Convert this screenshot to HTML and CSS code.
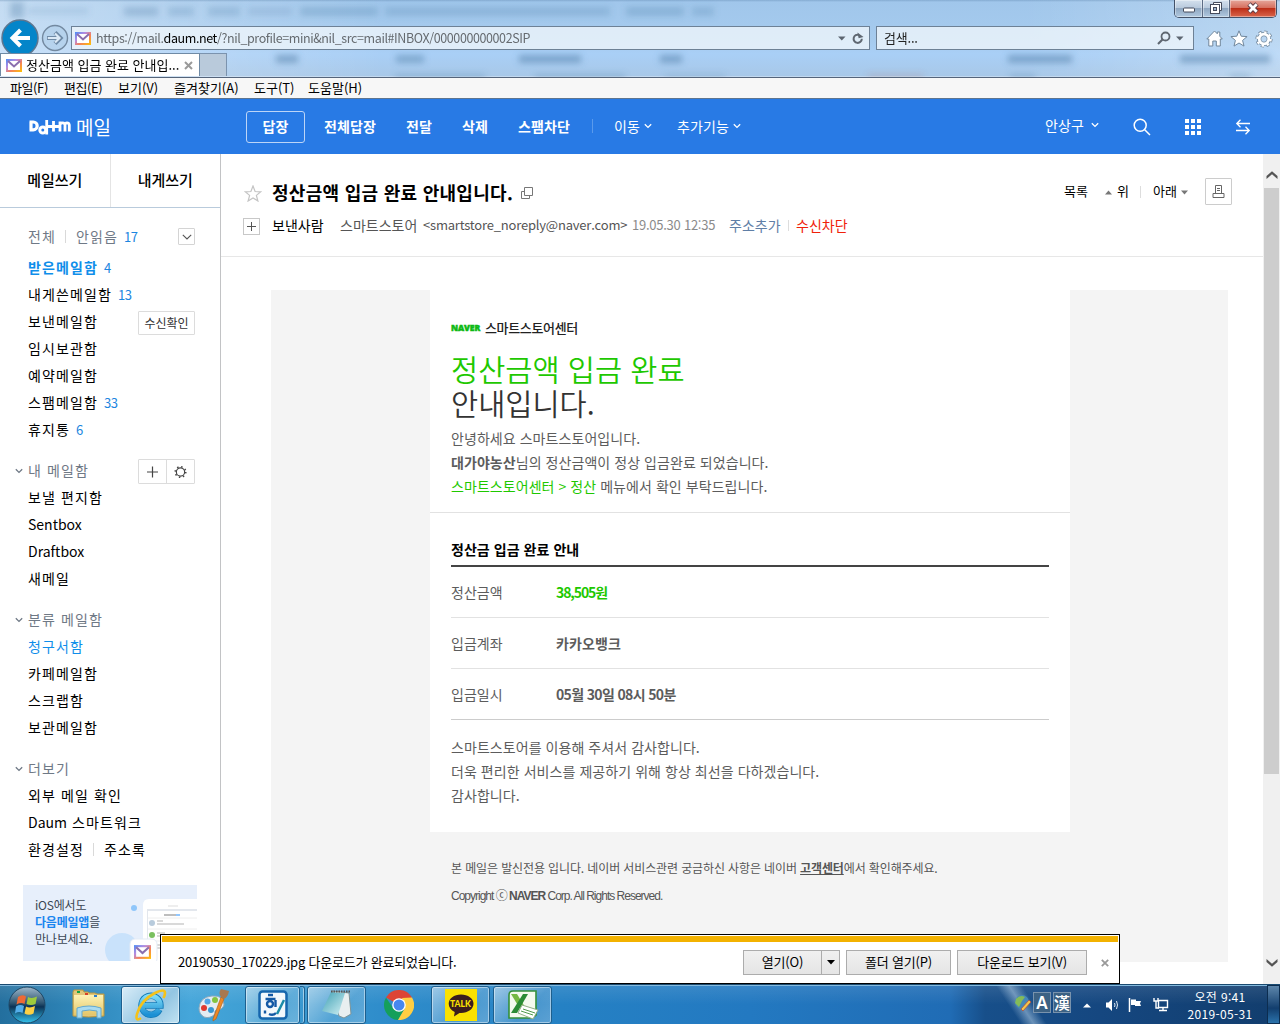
FILE: index.html
```html
<!DOCTYPE html>
<html lang="ko">
<head>
<meta charset="utf-8">
<title>Daum 메일</title>
<link rel="stylesheet" href="styles.css">
</head>
<body>
<svg width="0" height="0" class="defs">
  <defs>
    <linearGradient id="mailg" x1="0" y1="0" x2="1" y2="1"><stop offset="0" stop-color="#4a8df5"/><stop offset=".35" stop-color="#b58be0"/><stop offset=".6" stop-color="#f4805c"/><stop offset="1" stop-color="#ffc400"/></linearGradient>
    <symbol id="mail" viewBox="0 0 16 13"><rect width="16" height="13" fill="url(#mailg)"/><rect x="2" y="2" width="12" height="9" fill="#fff"/><path d="M2 2l6 5.5L14 2" fill="none" stroke="#8a6fae" stroke-width="2"/></symbol>
    <symbol id="chev" viewBox="0 0 8 6"><path d="M.8 1.2L4 4.4l3.2-3.2" fill="none" stroke="currentColor" stroke-width="1.3"/></symbol>
    <linearGradient id="orb" x1="0" y1="0" x2="0" y2="1"><stop offset="0" stop-color="#9fb9cc"/><stop offset=".45" stop-color="#2d536f"/><stop offset=".55" stop-color="#0b3255"/><stop offset="1" stop-color="#35c4ee"/></linearGradient>
    <linearGradient id="ie" x1="0" y1="0" x2="0" y2="1"><stop offset="0" stop-color="#7fdcf8"/><stop offset="1" stop-color="#1c90d4"/></linearGradient>
    <linearGradient id="fold" x1="0" y1="0" x2="0" y2="1"><stop offset="0" stop-color="#fdf3b6"/><stop offset="1" stop-color="#e4c669"/></linearGradient>
    <linearGradient id="pad" x1="0" y1="0" x2="1" y2="1"><stop offset="0" stop-color="#3c9fb4"/><stop offset="1" stop-color="#d5f2f5"/></linearGradient>
  </defs>
</svg>

<header class="glass">
  <svg class="haze" width="1280" height="77">
    <g filter="url(#b)" fill="#4d7ea6">
      <rect x="10" y="2" width="14" height="16" opacity=".35"/>
      <rect x="28" y="8" width="60" height="6" opacity=".18"/><rect x="124" y="7" width="34" height="9" opacity=".3"/><rect x="168" y="7" width="26" height="9" opacity=".25"/><rect x="208" y="7" width="32" height="9" opacity=".25"/><rect x="248" y="8" width="44" height="7" opacity=".2"/><rect x="300" y="7" width="78" height="9" opacity=".28"/><rect x="385" y="7" width="225" height="9" opacity=".25"/><rect x="626" y="7" width="58" height="9" opacity=".28"/><rect x="692" y="7" width="22" height="9" opacity=".25"/>
      <rect x="276" y="55" width="22" height="8" opacity=".5"/><rect x="396" y="55" width="28" height="8" opacity=".45"/><rect x="519" y="55" width="62" height="8" opacity=".5"/><rect x="660" y="55" width="22" height="8" opacity=".5"/><rect x="1008" y="55" width="64" height="8" opacity=".5"/><rect x="1180" y="55" width="90" height="8" opacity=".5"/>
      <rect x="395" y="74" width="90" height="5" opacity=".3"/><rect x="535" y="74" width="90" height="5" opacity=".3"/><rect x="665" y="74" width="60" height="5" opacity=".2"/><rect x="868" y="74" width="55" height="5" fill="#b06a60" opacity=".2"/><rect x="1010" y="74" width="25" height="5" opacity=".3"/><rect x="1230" y="74" width="20" height="5" opacity=".3"/>
    </g>
    <filter id="b" x="-5%" y="-20%" width="110%" height="140%"><feGaussianBlur stdDeviation="3.2"/></filter>
  </svg>
  <div class="titlebar">
    <div class="winbtns">
      <span class="wb wmin"><svg width="14" height="8"><rect x="1.5" y="2" width="11" height="4" rx="1" fill="#fff" stroke="#454b5c"/></svg></span>
      <span class="wb wmax"><svg width="14" height="14"><path d="M4.500 1.500h8v8h-2v-6h-6z" fill="#fff" stroke="#454b5c"/><rect x="1.500" y="3.500" width="9" height="9" fill="#fff" stroke="#454b5c"/><rect x="4.500" y="6.500" width="3" height="3" fill="#9db4cf" stroke="#454b5c"/></svg></span>
      <span class="wb wclose"><svg width="12" height="12" viewBox="0 0 12 12"><path d="M2 2l8 8M10 2l-8 8" stroke="#5a3a44" stroke-width="4.600"/><path d="M2.300 2.300l7.400 7.400M9.700 2.300L2.300 9.700" stroke="#fff" stroke-width="2.800"/></svg></span>
    </div>
  </div>
  <div class="navrow">
    <svg class="back" width="38" height="38"><circle cx="19" cy="19" r="18" fill="#0485c9" stroke="#5c7690" stroke-width="1.500"/><path d="M29 19H13M19.500 11l-8 8 8 8" fill="none" stroke="#fff" stroke-width="4"/></svg>
    <svg class="fwd" width="28" height="28"><circle cx="14" cy="14" r="12.500" fill="#a9c9e6" fill-opacity=".5" stroke="#7389a0" stroke-width="1.400"/><path d="M6 14h13M14 8.500l5.500 5.500-5.500 5.500" fill="none" stroke="#6f8aa6" stroke-width="4.200"/><path d="M6.800 14h11M14 9.500l4.500 4.500-4.500 4.500" fill="none" stroke="#dbe9f6" stroke-width="2.200"/></svg>
    <div class="addr">
      <svg class="fav" width="16" height="13"><use href="#mail"/></svg>
      <span class="url">https://mail.<b>daum.net</b>/?nil_profile=mini&amp;nil_src=mail#INBOX/000000000002SIP</span>
      <svg width="8" height="5"><path d="M0 .5h7.500L3.750 4.500z" fill="#5c6570"/></svg>
      <svg class="reload" width="12" height="13" viewBox="0 0 12 13"><path d="M9.800 6.800A4.100 4.100 0 1 1 7 2.900" fill="none" stroke="#5f6771" stroke-width="2"/><path d="M6 0v5.800h5z" fill="#5f6771" transform="rotate(-12 8 3)"/></svg>
    </div>
    <div class="search">
      <span class="q">검색...</span>
      <svg width="14" height="14"><circle cx="8.500" cy="5.500" r="4" fill="none" stroke="#5f6771" stroke-width="1.800"/><path d="M5.500 8.500L1 13" stroke="#5f6771" stroke-width="2.200"/></svg>
      <svg class="sdrop" width="8" height="5"><path d="M0 .5h7.500L3.750 4.500z" fill="#5c6570"/></svg>
    </div>
    <div class="tools">
      <svg width="17" height="17"><path d="M8.500 1L.8 9h2v7h4v-5h3.500v5h4V9h2L13.800 6.200V2h-2.500v1.800z" fill="#fff" stroke="#71879c"/></svg>
      <svg width="18" height="17"><path d="M9 .8l2.200 5.400 5.900.4-4.500 3.800 1.400 5.700L9 13l-5 3.100 1.400-5.700L.9 6.600l5.900-.4z" fill="#fff" stroke="#71879c"/></svg>
      <svg width="18" height="18" viewBox="-9 -9 18 18"><circle r="7" fill="none" stroke="#71879c" stroke-width="3.200" stroke-dasharray="3 2.498"/><circle r="4.900" fill="none" stroke="#71879c" stroke-width="4.400"/><circle r="6.800" fill="none" stroke="#fff" stroke-width="2" stroke-dasharray="2.400 2.940"/><circle r="4.800" fill="none" stroke="#fff" stroke-width="2.800"/></svg>
    </div>
  </div>
  <div class="tabs">
    <div class="tab"><svg width="16" height="13"><use href="#mail"/></svg><span>정산금액 입금 완료 안내입...</span><svg width="9" height="9"><path d="M1 1l7 7M8 1L1 8" stroke="#9a9a9a" stroke-width="2"/></svg></div>
    <div class="newtab"></div>
  </div>
</header>
<nav class="menubar"><span class="n">파일(F)</span><span class="n">편집(E)</span><span class="w2">보기(V)</span><span class="w4">즐겨찾기(A)</span><span>도구(T)</span><span>도움말(H)</span></nav>

<div class="bluebar">
  <div class="logo">
    <svg width="43" height="19" viewBox="0 0 43 19" fill="none" stroke="#fff"><path d="M3 5v8M1.500 5h3.800a3.600 3.600 0 0 1 0 7.800H1.500" stroke-width="3.200"/><circle cx="14.800" cy="13" r="3" stroke-width="3"/><path d="M18.700 3v14.500M18 9.500h13M25.500 4v10.500" stroke-width="2.800"/><path d="M32 14.500V4.500M32 8q0-2.200 2.500-2.200T37 8v6.500M37 8q0-2.200 2-2.200T41.300 8v6.500" stroke-width="2.800"/></svg>
    <span>메일</span>
  </div>
  <span class="reply">답장</span>
  <div class="acts"><b class="a4">전체답장</b><b class="a2">전달</b><b class="a2">삭제</b><b class="a5">스팸차단</b><i></i><span class="m1">이동<svg width="8" height="6"><use href="#chev"/></svg></span><span>추가기능<svg width="8" height="6"><use href="#chev"/></svg></span></div>
  <span class="user">안상구<svg width="8" height="6"><use href="#chev"/></svg></span>
  <svg class="i1" width="18" height="18" fill="none" stroke="#fff" stroke-width="1.500"><circle cx="7.200" cy="7.200" r="6"/><path d="M11.500 11.500l5.500 5.500"/></svg>
  <svg class="i2" width="16" height="16" fill="#fff"><path d="M0 0h4v4H0zM6 0h4v4H6zM12 0h4v4h-4zM0 6h4v4H0zM6 6h4v4H6zM12 6h4v4h-4zM0 12h4v4H0zM6 12h4v4H6zM12 12h4v4h-4z"/></svg>
  <svg class="i3" width="16" height="16" fill="none" stroke="#fff" stroke-width="1.300"><path d="M15 4.500H2M5.500.8L1.800 4.500l3.700 3.700M1 11.500h13M10.500 7.800l3.700 3.700-3.700 3.700"/></svg>
</div>

<main class="main">
  <aside class="side">
    <div class="write"><b>메일쓰기</b><b>내게쓰기</b></div>
    <div class="boxes">
      <div class="row gray first"><span>전체</span><i class="bar"></i><span>안읽음</span><em>17</em><span class="sq"><svg width="10" height="6" viewBox="0 0 10 6"><path d="M.8.8L5 5 9.200.8" fill="none" stroke="#555" stroke-width="1.100"/></svg></span></div>
      <div class="row on"><b>받은메일함</b><em>4</em></div>
      <div class="row">내게쓴메일함<em>13</em></div>
      <div class="row">보낸메일함<span class="chk">수신확인</span></div>
      <div class="row">임시보관함</div>
      <div class="row">예약메일함</div>
      <div class="row">스팸메일함<em>33</em></div>
      <div class="row">휴지통<em>6</em></div>
      <div class="row gray head"><svg width="8" height="6"><use href="#chev"/></svg>내 메일함<span class="pair"><svg width="27" height="23"><path d="M8 12h11M13.500 6.500v11" stroke="#444" stroke-width="1.200"/></svg><svg width="28" height="23" viewBox="-14 -11.500 28 23"><circle cy=".5" r="4.300" fill="none" stroke="#444" stroke-width="1.200"/><circle cy=".5" r="5.500" fill="none" stroke="#444" stroke-width="1.600" stroke-dasharray="1.500 2.820"/></svg></span></div>
      <div class="row">보낼 편지함</div>
      <div class="row lat">Sentbox</div>
      <div class="row lat">Draftbox</div>
      <div class="row">새메일</div>
      <div class="row gray head"><svg width="8" height="6"><use href="#chev"/></svg>분류 메일함</div>
      <div class="row sel">청구서함</div>
      <div class="row">카페메일함</div>
      <div class="row">스크랩함</div>
      <div class="row">보관메일함</div>
      <div class="row gray head"><svg width="8" height="6"><use href="#chev"/></svg>더보기</div>
      <div class="row">외부 메일 확인</div>
      <div class="row"><span class="lat daum">Daum</span>스마트워크</div>
      <div class="row"><span>환경설정</span><i class="bar"></i><span>주소록</span></div>
    </div>
    <div class="banner">
      <p>iOS에서도<br><b>다음메일앱</b>을<br>만나보세요.</p>
      <svg width="95" height="76"><circle cx="32" cy="23" r="3" fill="#8fc6fa"/><circle cx="20" cy="65" r="17" fill="#c9e2fb"/><path d="M41 76V20q0-6 6-6h48v62z" fill="#fff"/><path d="M45 24h50v52H45z" fill="#e3e7ed"/><path d="M46 26h49v50H46z" fill="#fff"/><path d="M66 21h10" stroke="#ddd"/><path d="M62 30h12" stroke="#555" stroke-width="1.500" opacity=".5"/><path d="M74 30h4" stroke="#39f" stroke-width="1.500" opacity=".7"/><circle cx="50" cy="38" r="3" fill="#b8cbdc"/><circle cx="50" cy="50" r="3" fill="#7ac060"/><path d="M55 36h6M55 39h27M55 48h8M55 51h33M55 60h9M55 63h30" stroke="#b3b3b3"/><path d="M46 33h49M46 44h49M46 56h49" stroke="#eee"/><rect x="28" y="54" width="27" height="25" rx="5" fill="#fff" stroke="#e3ebf5"/><svg x="32" y="60" width="17" height="14"><use href="#mail"/></svg></svg>
    </div>
  </aside>

  <section class="content">
    <div class="mhead">
      <div class="subj">
        <svg class="star" width="18" height="17"><path d="M9 1l2.100 5.500 5.700.3-4.400 3.600 1.500 5.600L9 12.900 4.100 16l1.500-5.600L1.200 6.800l5.700-.3z" fill="none" stroke="#c4c4c4" stroke-width="1.200"/></svg>
        <h1>정산금액 입금 완료 안내입니다.</h1>
        <svg class="pop" width="13" height="13" fill="none" stroke="#777"><path d="M3.500.5h8v8h-8zM3.500 4.500h-3v7h8v-3"/></svg>
        <span class="t1">목록</span><svg class="up" width="7" height="5"><path d="M0 4.500h7L3.500.5z" fill="#777"/></svg><span class="t2">위</span><i></i><span class="t3">아래</span><svg class="dn" width="7" height="5"><path d="M0 .5h7l-3.500 4z" fill="#777"/></svg>
        <span class="print"><svg width="13" height="13" fill="none" stroke="#666"><path d="M3.500 8V.5h6V8M1 8.500h11v4H1zM5 3.500h3M5 5.500h3"/></svg></span>
      </div>
      <div class="from">
        <span class="plus"><svg width="15" height="15"><path d="M3 7.500h9M7.500 3v9" stroke="#555"/></svg></span>
        <span class="lab">보낸사람</span><span class="who">스마트스토어</span><span class="mailto">&lt;smartstore_noreply@naver.com&gt;</span><span class="date">19.05.30 12:35</span><span class="add">주소추가</span><i></i><span class="block">수신차단</span>
      </div>
    </div>
    <div class="mail">
      <div class="card">
        <div class="intro">
          <div class="brand"><b>NAVER</b><span>스마트스토어센터</span></div>
          <h2><em>정산금액 입금 완료</em><br>안내입니다.</h2>
          <p>안녕하세요 스마트스토어입니다.<br><b>대가야농산</b>님의 정산금액이 정상 입금완료 되었습니다.<br><em>스마트스토어센터 &gt; 정산</em> 메뉴에서 확인 부탁드립니다.</p>
        </div>
        <div class="detail">
          <h3>정산금 입금 완료 안내</h3>
          <dl><dt>정산금액</dt><dd class="green">38,505원</dd></dl>
          <dl><dt>입금계좌</dt><dd>카카오뱅크</dd></dl>
          <dl class="last"><dt>입금일시</dt><dd class="when">05월 30일 08시 50분</dd></dl>
          <p>스마트스토어를 이용해 주셔서 감사합니다.<br>더욱 편리한 서비스를 제공하기 위해 항상 최선을 다하겠습니다.<br>감사합니다.</p>
        </div>
      </div>
      <div class="foot"><p>본 메일은 발신전용 입니다. 네이버 서비스관련 궁금하신 사항은 네이버 <b>고객센터</b>에서 확인해주세요.</p><p class="copy">Copyright <span>ⓒ</span> <strong>NAVER</strong> Corp. All Rights Reserved.</p></div>
    </div>
  </section>
  <div class="scroll">
    <svg width="12" height="9"><path d="M.5 8V5L6 .3 11.500 5v3L6 3.300z" fill="#555"/></svg>
    <div class="thumb"></div>
    <svg class="sd" width="12" height="9"><path d="M.5 1v3L6 8.700 11.500 4V1L6 5.700z" fill="#555"/></svg>
  </div>
</main>

<div class="dl">
  <div class="dlrow"><span class="fn">20190530_170229.jpg 다운로드가 완료되었습니다.</span><span class="btn o">열기(O)</span><span class="btn arr"><svg width="8" height="5"><path d="M0 0h8L4 4.500z"/></svg></span><span class="btn p">폴더 열기(P)</span><span class="btn v">다운로드 보기(V)</span><svg class="x" width="8" height="8"><path d="M.8.8l6.400 6.400M7.200.8L.8 7.200" stroke="#999" stroke-width="1.800"/></svg></div>
</div>

<footer class="task">
  <span class="orb"><svg width="38" height="38" viewBox="-19 -19 38 38"><circle r="18" fill="url(#orb)" stroke="#1e4664"/><path d="M-9-8Q-5-11-1-8.500L-2.500-1Q-6-3-10.500-.5z" fill="#ee6a35"/><path d="M1-8Q5-6 10-8.500L8.500-1Q4 1-.5-1z" fill="#9ecb3c"/><path d="M-11 1.500Q-7-1-3 1L-4.500 8Q-8 6-12 8.500z" fill="#53aeea"/><path d="M-1 1.500Q3 3.500 8 1L6.500 8.500Q2 11-2.500 8.500z" fill="#fbd044"/></svg></span>
  <span class="tk plain ex"><svg width="34" height="31"><path d="M1 3l1-2h9l1 2h4l1 1h6l2 1h7v22q-15 2-31 0z" fill="#e2c779" stroke="#b8963e"/><path d="M2 6h29v20H2z" fill="url(#fold)"/><path d="M5 3h3" stroke="#16a343" stroke-width="2"/><path d="M13 5h3" stroke="#d94028" stroke-width="2"/><path d="M22 7h3" stroke="#2b80d0" stroke-width="2"/><path d="M5 29V19q12-4 24 0v10h-4v-7q-8-2-15 0v7z" fill="#a9dbf1" stroke="#62a9d0"/></svg></span>
  <span class="tk on ie"><svg width="34" height="34" viewBox="0 0 34 34"><path d="M25.500 21.500A9.500 9.500 0 1 1 26.500 17.500H9.500" fill="none" stroke="#137bb8" stroke-width="6.400"/><path d="M25.200 21.500A9.300 9.300 0 1 1 26.200 17.500H9.500" fill="none" stroke="url(#ie)" stroke-width="5"/><path d="M7 30Q1 34 3 26 7 12 21 5q10-5 10 0 0 2-1.500 5" fill="none" stroke="#f5c21a" stroke-width="2.600"/></svg></span>
  <span class="tk plain pa"><svg width="34" height="34"><path d="M3 20Q4 9 16 8q12-1 12 9-2 5-7 5-3 0-2 4-5 5-11 3-5-3-5-9z" fill="#e4ecf2" stroke="#8fa9bb"/><circle cx="8" cy="20" r="3" fill="#e0392f"/><circle cx="11.500" cy="13.500" r="3" fill="#50a6e6"/><circle cx="19" cy="12" r="3" fill="#83c441"/><circle cx="15" cy="22" r="3" fill="#3796d2"/><path d="M17 31L25 9l3 2-8 20-3 2z" fill="#ee8826" stroke="#a85c18" stroke-width=".6"/><path d="M25 9q-3-4 0-8l8 2q-1 6-5 8z" fill="#a87850"/></svg></span>
  <span class="tk han"><svg width="30" height="30"><rect x="1.500" y="1.500" width="27" height="27" rx="3" fill="#f3f8fc" stroke="#1666ad" stroke-width="2.500"/><g fill="none" stroke="#1459a5" stroke-width="2.400"><path d="M10 5h5M7.500 9h10"/><circle cx="12" cy="14" r="3"/><path d="M17.500 10v7M7 20.500v3M11 24q4 2 7-1"/></g><path d="M26 10l-7 14" stroke="#1c8ba8" stroke-width="2.500"/></svg></span><span class="edge"></span>
  <span class="tk np"><svg width="32" height="31"><path d="M11 2l17 2 2 21-7 4-5-2z" fill="#e9eff0" stroke="#7e9498"/><path d="M10 3l14 1-7 22L1 22z" fill="url(#pad)"/><path d="M10 2.500h19" stroke="#565656" stroke-width="2" stroke-dasharray="1.500 1"/></svg></span>
  <span class="tk plain ch"><svg width="30" height="30" viewBox="-15 -15 30 30"><path d="M0 0L-13-7.500A15 15 0 0 1 13-7.500z" fill="#dd4436"/><path d="M-13-7.500A15 15 0 0 0-1 15L6 3-6 3z" fill="#159f5b"/><path d="M13-7.500A15 15 0 0 1-1 15L6 3 3-7z" fill="#ffce43"/><circle r="6.800" fill="#fff"/><circle r="5.500" fill="#4787ef"/></svg></span>
  <span class="tk ka"><span class="kk"><svg width="32" height="32" viewBox="0 0 32 32"><path d="M16 5.500c-7 0-12.300 4-12.300 9.300 0 3.600 2.300 6.500 6 8.200L9 27.500l5.500-3.600c8 .6 14-3.600 14-9.100 0-5.300-5.500-9.300-12.500-9.300z" fill="#3b1e1e"/></svg><b>TALK</b></span></span>
  <span class="tk xl"><svg width="32" height="32"><path d="M2 6q0-4 4-4h23v24L25 29H2z" fill="#f4faee" stroke="#34903a" stroke-width="1.600"/><path d="M4 5h6l11 18h-6z" fill="#75b843"/><path d="M4 24L16 5h5L10 24z" fill="#2b8b35"/><path d="M15 16l16 5-5 9-15-6z" fill="#fff" stroke="#92af88"/><path d="M16 20l12 4M14 22l12 4" stroke="#509a4b"/></svg></span>
  <div class="tray">
    <svg width="18" height="18"><circle cx="8" cy="8" r="7" fill="#4589b8"/><path d="M2 5q4-5 9-2l-3 4-3 6-4-4z" fill="#84bb58"/><path d="M7 15L15 6l2 2-8 9z" fill="#f3c64a" stroke="#b34236" stroke-width=".7"/></svg>
    <b class="ime">A</b><b class="ime hj">漢</b>
    <svg class="ta" width="8" height="5"><path d="M0 4.500L4 .5l4 4z" fill="#fff"/></svg>
    <svg class="tb" width="14" height="14"><path d="M1 4.500h2.500L7 1v12L3.500 9.500H1z" fill="#fff"/><path d="M9.500 5q1 2 0 4M11.500 3q2 4 0 8" stroke="#dfeaf5" fill="none"/></svg>
    <svg class="tc" width="14" height="14"><path d="M1.500 0v14" stroke="#fff" stroke-width="1.500"/><path d="M3 1.500h5v1.500h5l-1 2.500 1 2.500H7V7H3z" fill="#fff"/></svg>
    <svg class="td" width="16" height="15" fill="none" stroke="#fff"><path d="M5.500 3.500h9v7h-9zM10 10.500v3M6 13.500h8" stroke-width="1.400"/><path d="M1 1v3h4V1M3 4v7h3" stroke-width="1.400"/></svg>
    <div class="clock">오전 9:41<br>2019-05-31</div>
    <span class="show"></span>
  </div>
</footer>
</body>
</html>
```
FILE: styles.css
```css
* { box-sizing: border-box; margin: 0; padding: 0; }
body {
  width: 1280px; height: 1024px; overflow: hidden; position: relative;
  display: flex; flex-direction: column; background: #fff; color: #000;
  font-family: "Noto Sans CJK KR", "Noto Sans", sans-serif; font-size: 13px; white-space: nowrap;
}
svg { display: block; flex: none; }
.defs { position: absolute; }
em, i { font-style: normal; }

/* window frame */
.glass {
  height: 78px; flex: none; position: relative; border-bottom: 1px solid #55647a; overflow: hidden;
  background: linear-gradient(180deg, rgba(80,120,160,.35) 0, transparent 2px), linear-gradient(90deg, rgba(255,255,255,.38) 0, transparent 30%, transparent 80%, rgba(255,255,255,.25) 100%), linear-gradient(180deg, #a0c6eb 0, #a6cbee 40px, #a9cff6 54px, #a8c8e8 76px, #dce9f6 77px);
}
.haze { position: absolute; left: 0; top: 0; }
.titlebar { height: 19px; position: relative; display: flex; justify-content: flex-end; padding-right: 3px; }
.winbtns { display: flex; width: 103px; height: 18px; border: 1px solid #435168; border-top: 0; border-radius: 0 0 5px 5px; overflow: hidden; }
.wb { display: flex; align-items: center; justify-content: center; background: linear-gradient(#d4e1ee 0, #b9cadd 45%, #8fa7c1 50%, #b0c8df 100%); border-right: 1px solid #5c6c84; box-shadow: inset 0 0 0 1px rgba(255,255,255,.4); }
.wmin { width: 28px; padding-top: 3px; }
.wmax { width: 27px; padding-bottom: 2px; }
.wclose { flex: 1; border: 0; padding-bottom: 2px; background: linear-gradient(#e6a79b 0, #d6705f 45%, #bd2f18 50%, #d9664c 100%); }
.navrow { height: 34px; position: relative; display: flex; overflow: hidden; }
.back { margin-left: 1px; }
.fwd { margin: 5px 2px 0 2px; }
.addr, .search { margin-top: 7px; height: 24px; border: 1px solid #6d8196; background: rgba(240,246,251,.78); display: flex; align-items: center; }
.addr { width: 799px; padding-left: 3px; }
.url { width: 742px; margin-left: 5px; color: #666b70; font-size: 12.5px; letter-spacing: -.4px; line-height: 20px; }
.url b { font-weight: 400; color: #000; }
.reload { margin-left: 6px; }
.search { width: 318px; margin-left: 6px; padding-left: 7px; }
.q { width: 273px; line-height: 20px; color: #222; letter-spacing: -.2px; }
.sdrop { margin-left: 5px; }
.tools { display: flex; gap: 7px; margin: 11px 0 0 12px; }
.tabs { display: flex; height: 24px; position: relative; }
.tab { width: 200px; background: #fff; border: 1px solid #6f8aa5; border-width: 1px 1px 0 1px; height: 23px; display: flex; align-items: center; padding-left: 5px; }
.tab span { width: 158px; margin-left: 4px; line-height: 20px; }
.newtab { width: 27px; height: 23px; border: 1px solid #7b93ae; border-width: 1px 1px 0 0; background: #b9cadb; }
.menubar { height: 21px; flex: none; background: #f7f7f7; border-bottom: 1px solid #5e7590; display: flex; padding-left: 10px; line-height: 20px; }
.menubar span { width: 54px; }
.menubar .n { letter-spacing: -.4px; }
.menubar .w2 { width: 56px; }
.menubar .w4 { width: 80px; }

/* toolbar */
.bluebar { height: 55px; flex: none; background: #287ae5; color: #fff; display: flex; align-items: center; font-size: 14px; letter-spacing: .12px; }
.logo { width: 246px; padding-left: 28px; display: flex; align-items: center; font-size: 19px; gap: 5px; line-height: 24px; }
.reply { width: 59px; height: 32px; border: 1px solid #bcd5f7; border-radius: 3px; text-align: center; line-height: 28px; font-weight: 700; }
.acts { display: flex; align-items: center; margin-left: 19px; width: 721px; line-height: 20px; padding-bottom: 2px; }
.a4 { width: 82px; } .a2 { width: 56px; } .a5 { width: 74px; }
.acts i { width: 1px; height: 14px; background: #5a9aec; margin-right: 21px; }
.acts span, .user { display: flex; align-items: center; gap: 4px; }
.m1 { width: 63px; }
.user { width: 88px; gap: 7px; padding-bottom: 3px; }
.i2 { margin-left: 34px; } .i3 { margin-left: 34px; }

/* sidebar */
.main { height: 830px; flex: none; display: flex; overflow: hidden; }
.side { width: 221px; border-right: 1px solid #c2c3c5; }
.write { display: flex; height: 54px; border-bottom: 1px solid #b9cbdc; }
.write b { flex: 1; text-align: center; line-height: 51px; font-size: 15px; font-weight: 500; }
.write b:first-child { border-right: 1px solid #e4e4e4; }
.boxes { padding: 15px 25px 0 28px; height: 677px; }
.row { height: 27px; display: flex; align-items: center; font-size: 14px; letter-spacing: 1.1px; line-height: 27px; }
.row em { font-size: 13px; letter-spacing: -.3px; color: #1c86e0; margin-left: 6px; }
.lat { letter-spacing: 0; }
.daum { margin-right: 5px; }
.gray { color: #6f7986; }
.first { margin-bottom: 4px; }
.bar { width: 1px; height: 13px; background: #d9d9d9; margin: 0 10px 0 9px; }
.sq { margin-left: auto; width: 17px; height: 17px; border: 1px solid #d4d4d4; border-radius: 1px; display: flex; align-items: center; justify-content: center; }
.on b { color: #0f8eea; } .sel { color: #0f8eea; }
.chk { margin-left: auto; width: 57px; height: 24px; margin-top: 2px; border: 1px solid #dcdcdc; border-radius: 1px; color: #333; font-size: 12px; letter-spacing: -.1px; line-height: 21px; text-align: center; }
.head { margin-top: 14px; margin-left: -13px; gap: 5px; }
.pair { margin-left: auto; width: 57px; height: 25px; border: 1px solid #dcdcdc; border-radius: 1px; display: flex; margin-top: 1px; }
.pair svg + svg { border-left: 1px solid #dcdcdc; }
.banner { margin: 0 0 0 23px; width: 174px; height: 76px; background: #e7effb; display: flex; }
.banner p { width: 79px; padding: 11px 0 0 12px; font-size: 12px; line-height: 17px; color: #3b4754; letter-spacing: -.2px; }
.banner b { color: #1a86ef; }

/* message */
.content { width: 1042px; }
.mhead { height: 103px; border-bottom: 1px solid #e7e7e7; padding: 22px 0 0 22px; }
.subj { display: flex; height: 32px; align-items: center; font-size: 13px; }
.star { margin: 2px 10px 0 1px; }
h1 { font-size: 18px; letter-spacing: .28px; width: 249px; line-height: 30px; }
.pop { margin: 3px 530px 0 0; }
.subj span { margin-bottom: 3px; }
.t1 { width: 41px; } .t2 { margin-left: 5px; width: 23px; } .t3 { width: 28px; }
.subj i { width: 1px; height: 12px; background: #ddd; margin-right: 12px; }
.subj .print { width: 27px; height: 27px; border: 1px solid #ccc; border-radius: 1px; margin: 0 0 2px 17px; display: flex; align-items: center; justify-content: center; }
.from { display: flex; height: 32px; align-items: center; margin-top: 1px; font-size: 14px; letter-spacing: 0; line-height: 20px; }
.plus { width: 17px; height: 17px; border: 1px solid #c8c8c8; margin-right: 12px; margin-top: 2px; }
.lab { width: 68px; } .who { width: 83px; color: #555; }
.mailto { width: 209px; color: #555; font-size: 13px; letter-spacing: -.2px; }
.date { width: 97px; color: #8b8b8b; font-size: 13px; letter-spacing: -.25px; } .add { width: 59px; color: #5f7ea6; } .block { color: #f0210a; }
.from i { width: 1px; height: 11px; background: #ddd; margin-right: 7px; }
.mail { margin: 33px 0 0 50px; width: 957px; height: 672px; background: #f4f4f4; padding-left: 159px; }
.card { width: 640px; height: 542px; background: #fff; color: #5c5c5c; font-size: 14px; }
.card p { line-height: 24px; letter-spacing: .06px; }
.intro { height: 223px; border-bottom: 1px solid #e2e2e2; padding: 27px 21px 0; }
.brand { display: flex; align-items: center; height: 20px; gap: 4px; font-size: 13px; letter-spacing: -.35px; color: #222; font-weight: 500; }
.brand b { font: 800 8.500px/14px "Open Sans", sans-serif; letter-spacing: -.1px; width: 30px; color: #0db914; -webkit-text-stroke: .5px #0db914; padding-top: 2px; }
h2 { font-weight: 350; font-size: 29.5px; line-height: 34px; color: #333; margin: 14px 0 7px; }
.card em, .card .green { color: #1ec800; }
.intro p b { font-weight: 700; }
.detail { padding: 25px 21px 0; }
h3 { color: #000; font-size: 14px; font-weight: 700; height: 29px; line-height: 23px; border-bottom: 2px solid #444; letter-spacing: .05px; }
dl { display: flex; height: 51px; line-height: 50px; border-bottom: 1px solid #e2e2e2; }
dl.last { border-color: #ccc; }
dt { width: 105px; } dd { font-weight: 700; letter-spacing: .1px; }
.card .green { letter-spacing: -1.1px; }
.when { letter-spacing: -.65px; }
.detail p { margin-top: 15px; }
.foot { padding: 22px 0 0 21px; font-size: 12px; color: #555; letter-spacing: -.12px; line-height: 27px; }
.foot b { text-decoration: underline; }
.copy { font-family: "Liberation Sans", "Noto Sans CJK KR", sans-serif; letter-spacing: -1px; }
.copy span { font-family: "Noto Sans CJK KR", sans-serif; }
.scroll { flex: 1; background: #f0f0f0; padding: 17px 0 0 1px; display: flex; flex-direction: column; }
.scroll svg { margin-left: 2px; }
.thumb { width: 15px; height: 586px; background: #cdcdcd; margin-top: 8px; }
.scroll .sd { margin-top: 184px; }

/* download notice floats over the page bottom */
.dl { position: absolute; left: 160px; top: 934px; width: 960px; height: 50px; background: #fff; border: 1px solid #000; padding: 1px; }
.dl::before { content: ""; display: block; height: 6px; background: #f3b200; }
.dlrow { display: flex; align-items: center; height: 40px; padding-left: 16px; font-size: 13px; line-height: 20px; }
.fn { width: 565px; letter-spacing: -.2px; }
.btn { height: 25px; border: 1px solid #acacac; background: linear-gradient(#f0f0f0, #e5e5e5); text-align: center; line-height: 22px; letter-spacing: -.2px; }
.o { width: 79px; } .arr { width: 18px; border-left: 0; display: flex; align-items: center; justify-content: center; }
.p { width: 105px; margin-left: 6px; } .v { width: 130px; margin-left: 6px; }
.x { margin-left: 14px; margin-top: 2px; }

/* taskbar */
.task { height: 40px; flex: none; display: flex; align-items: center; border-top: 1px solid #1a4a70; box-shadow: inset 0 1px 0 #83b9dd; background: linear-gradient(180deg, rgba(255,255,255,.1), transparent 50%), linear-gradient(90deg, #236f9e 0, #3089bd 90px, #45a6da 190px, #3d9dd2 260px, #2f8dcb 380px, #2581c4 560px, #2379c1 750px, #206cb5 950px, #174f8a 985px, #154780 1100px, #123d6d 1280px); }
.orb { margin-left: 8px; }
.tk { width: 59px; height: 38px; border: 1px solid #1d5f8e; border-radius: 3px; display: flex; align-items: center; justify-content: center; background: linear-gradient(135deg, rgba(255,255,255,.5), rgba(255,255,255,.15) 60%, rgba(255,255,255,.25)); box-shadow: inset 0 0 0 1px rgba(255,255,255,.45); flex: none; }
.tk.plain { border: 0; background: none; box-shadow: none; }
.tk.on { background: linear-gradient(135deg, #d9edf8, #93c5e2 60%, #c0e2f2); }
.ex { margin-left: 13px; } .ie { margin-left: 3px; } .pa { margin-left: 3px; } .han { width: 55px; margin-left: 3px; }
.edge { width: 5px; height: 38px; border: 1px solid #1d5f8e; border-left: 0; border-radius: 0 3px 3px 0; box-shadow: inset -1px 0 0 rgba(255,255,255,.5); }
.np { margin-left: 2px; } .ch { margin-left: 3px; } .ka { margin-left: 3px; } .xl { margin-left: 3px; }
.kk { width: 32px; height: 32px; background: #fae100; position: relative; }
.kk b { position: absolute; left: 0; right: 0; top: 8px; text-align: center; color: #fae100; font: 900 8.500px/14px "Lato", sans-serif; }
.tray { margin-left: auto; height: 39px; width: 295px; display: flex; align-items: center; color: #fff; padding-left: 29px; background: linear-gradient(57deg, transparent 30px, rgba(190,215,235,.5) 41px, transparent 52px); }
.ime { width: 18px; height: 21px; border: 1px solid #7993ad; background: #3c6284; text-align: center; font: 600 17px/19px "Noto Sans", sans-serif; margin: 0 2px 4px 0; }
.tray > svg:first-child { margin-bottom: 3px; margin-right: 1px; }
.hj { font: 500 16px/18px "Noto Sans CJK KR", sans-serif; }
.ta { margin: 2px 0 0 10px; } .tb { margin-left: 14px; } .tc { margin-left: 9px; } .td { margin-left: 11px; }
.clock { width: 84px; margin-left: 9px; text-align: center; font-size: 12px; line-height: 17px; letter-spacing: .35px; padding-top: 1px; }
.show { margin-left: auto; width: 13px; height: 39px; border: 1px solid #0c2d50; background: linear-gradient(#5d86ab, #123e6e 60%, #2b72ab); }
```
